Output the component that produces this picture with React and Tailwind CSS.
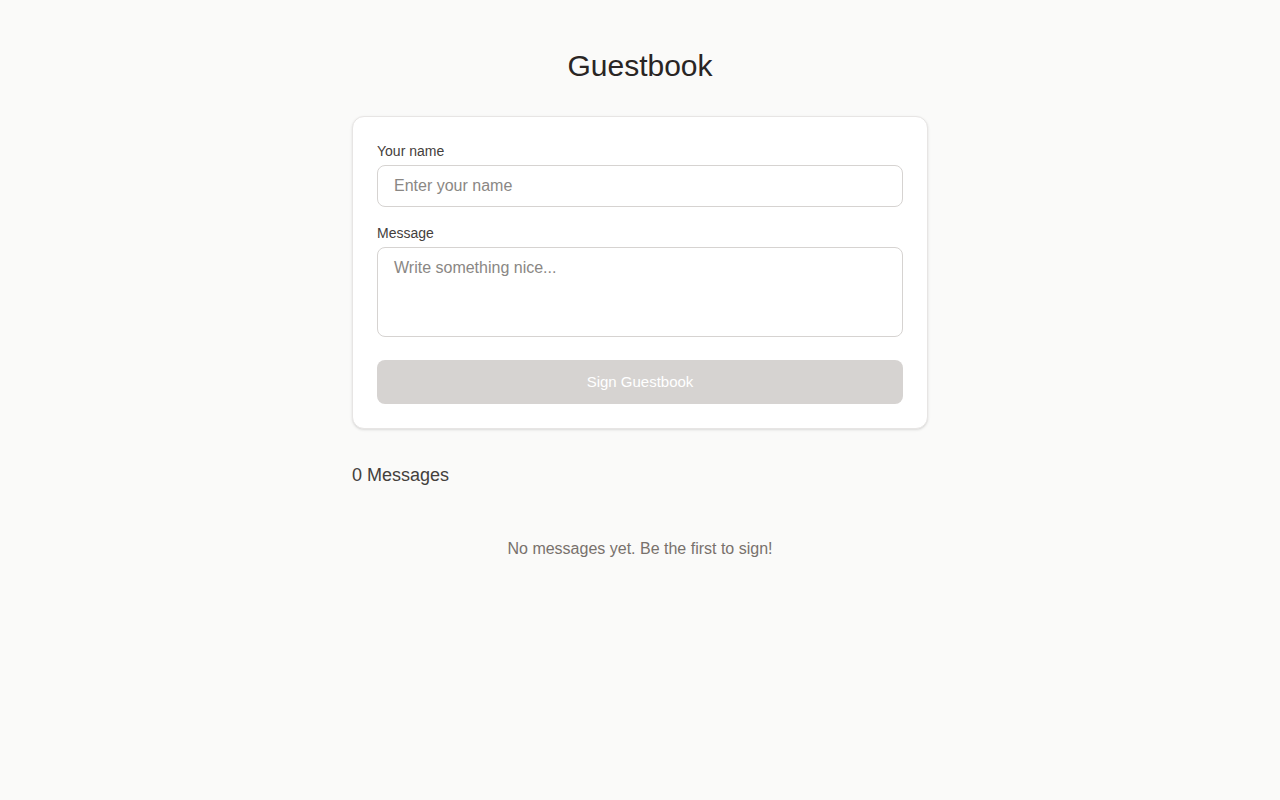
import React, { useState } from "react";

export default function App() {
  const [name, setName] = useState("");
  const [message, setMessage] = useState("");
  const [entries, setEntries] = useState([]);

  const submitHandler = (e) => {
    e.preventDefault();
    if (!name.trim() || !message.trim()) return;
    setEntries([{ name, message, date: new Date() }, ...entries]);
    setName("");
    setMessage("");
  };

  const disabled = !name.trim() || !message.trim();

  return (
    <div
      className="min-h-screen bg-[#fafaf9] text-[#292524]"
      style={{ fontFamily: "'Liberation Sans', Arial, sans-serif" }}
    >
      <div className="mx-auto max-w-xl py-12">
        <h1 className="mb-8 text-center text-3xl text-[#292524]">Guestbook</h1>

        <form
          onSubmit={submitHandler}
          className="rounded-xl border border-[#e7e5e4] bg-white p-6 shadow-sm"
        >
          <div className="flex flex-col gap-4">
            <div>
              <label className="mb-1 block text-sm text-[#44403c]">Your name</label>
              <input
                type="text"
                value={name}
                onChange={(e) => setName(e.target.value)}
                placeholder="Enter your name"
                className="block w-full rounded-lg border border-[#d6d3d1] px-4 py-2 text-base leading-6 placeholder:text-[#8a8784] focus:outline-none"
              />
            </div>
            <div>
              <label className="mb-1 block text-sm text-[#44403c]">Message</label>
              <textarea
                rows={3}
                value={message}
                onChange={(e) => setMessage(e.target.value)}
                placeholder="Write something nice..."
                className="block w-full resize-none rounded-lg border border-[#d6d3d1] px-4 py-2 text-base leading-6 placeholder:text-[#8a8784] focus:outline-none"
              />
            </div>
          </div>
          <button
            type="submit"
            disabled={disabled}
            className="mt-[23px] block h-11 w-full rounded-lg bg-[#d6d3d1] text-[15px] text-white disabled:cursor-not-allowed"
          >
            Sign Guestbook
          </button>
        </form>

        <h2 className="mt-8 text-lg leading-7 text-[#44403c]">
          {entries.length} Messages
        </h2>

        {entries.length === 0 ? (
          <p className="mt-12 text-center text-base leading-6 text-[#78716c]">
            No messages yet. Be the first to sign!
          </p>
        ) : (
          <div className="mt-4 flex flex-col gap-3">
            {entries.map((entry, i) => (
              <div key={i} className="rounded-xl border border-[#e7e5e4] bg-white p-4">
                <div className="text-sm font-bold text-[#292524]">{entry.name}</div>
                <p className="mt-1 text-base text-[#44403c]">{entry.message}</p>
              </div>
            ))}
          </div>
        )}
      </div>
    </div>
  );
}
